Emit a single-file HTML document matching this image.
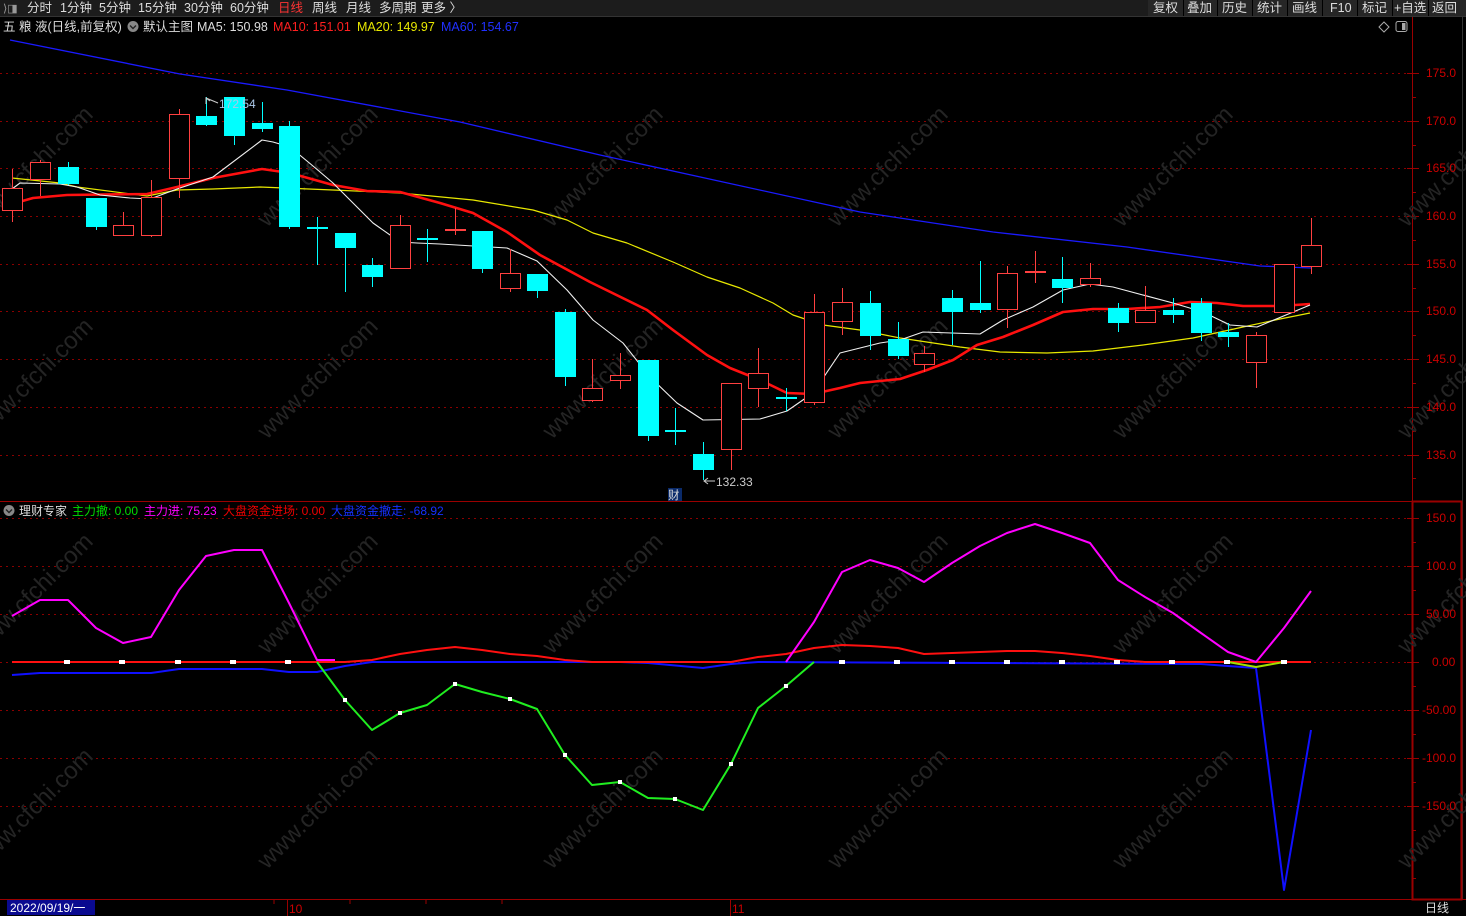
<!DOCTYPE html>
<html><head><meta charset="utf-8"><style>
html,body{margin:0;padding:0;background:#000;width:1466px;height:916px;overflow:hidden}
body{font-family:"Liberation Sans","Noto Sans CJK SC",sans-serif;}
svg{position:absolute;left:0;top:0}
text{font-family:"Liberation Sans","Noto Sans CJK SC",sans-serif}
</style></head><body>
<svg id="s" width="1466" height="916" viewBox="0 0 1466 916" xmlns="http://www.w3.org/2000/svg">
<rect x="0" y="0" width="1466" height="916" fill="#000"/>
<rect x="0" y="0" width="1466" height="16" fill="#1c1c1c"/>
<rect x="1148" y="0" width="318" height="16" fill="#262626"/>
<g stroke="#000" stroke-width="1">
<line x1="1183.5" y1="0" x2="1183.5" y2="16"/><line x1="1217.5" y1="0" x2="1217.5" y2="16"/><line x1="1252.5" y1="0" x2="1252.5" y2="16"/><line x1="1287.5" y1="0" x2="1287.5" y2="16"/><line x1="1322.5" y1="0" x2="1322.5" y2="16"/><line x1="1357.5" y1="0" x2="1357.5" y2="16"/><line x1="1392.5" y1="0" x2="1392.5" y2="16"/><line x1="1428.5" y1="0" x2="1428.5" y2="16"/>
</g>
<text x="3" y="12" font-size="11" fill="#999">⟩◨</text>
<g font-size="12.5" fill="#ddd">
<text x="27" y="12">分时</text><text x="60" y="12">1分钟</text><text x="99" y="12">5分钟</text><text x="138" y="12">15分钟</text><text x="184" y="12">30分钟</text><text x="230" y="12">60分钟</text>
<text x="278" y="12" fill="#ff3333">日线</text><text x="312" y="12">周线</text><text x="346" y="12">月线</text><text x="379" y="12">多周期</text><text x="421" y="12">更多 〉</text>
<text x="1153" y="12">复权</text><text x="1187" y="12">叠加</text><text x="1222" y="12">历史</text><text x="1257" y="12">统计</text><text x="1292" y="12">画线</text><text x="1330" y="12">F10</text><text x="1362" y="12">标记</text><text x="1394" y="12">+自选</text><text x="1432" y="12">返回</text>
</g>
<line x1="0" y1="16.5" x2="1466" y2="16.5" stroke="#333"/>
<g font-size="12.5">
<text x="3" y="31" fill="#ddd">五 粮 液(日线,前复权)</text>
<circle cx="133" cy="26.5" r="5.5" fill="#888"/><path d="M130 25.5l3 3 3-3" stroke="#222" stroke-width="1.4" fill="none"/>
<text x="143" y="31" fill="#ddd">默认主图</text>
<text x="197" y="31" fill="#ddd">MA5: 150.98</text>
<text x="273" y="31" fill="#ff2020">MA10: 151.01</text>
<text x="357" y="31" fill="#e8e800">MA20: 149.97</text>
<text x="441" y="31" fill="#2030ff">MA60: 154.67</text>
</g>
<path d="M1384 22l5 5-5 5-5-5z" stroke="#aaa" fill="none"/>
<rect x="1396" y="21.5" width="11" height="10" rx="2" stroke="#aaa" fill="none"/><rect x="1402" y="23" width="3.5" height="7" fill="#aaa"/>
<line x1="1412.5" y1="17" x2="1412.5" y2="900" stroke="#9a0000"/>
<line x1="1462.5" y1="17" x2="1462.5" y2="900" stroke="#333"/>
<line x1="0" y1="501.5" x2="1412" y2="501.5" stroke="#9a0000"/>
<line x1="0" y1="899.5" x2="1466" y2="899.5" stroke="#9a0000"/>
<rect x="1412.5" y="501.5" width="49" height="398" stroke="#9a0000" fill="none" stroke-width="2"/>
<g id="grid"></g>
<g id="wm" fill="#242424" font-size="24"></g>
<g id="chart"></g>
<g font-size="12" fill="#cc0000" text-anchor="start">
<text x="1426" y="77">175.0</text><text x="1426" y="125">170.0</text><text x="1426" y="172">165.0</text><text x="1426" y="220">160.0</text><text x="1426" y="268">155.0</text><text x="1426" y="315">150.0</text><text x="1426" y="363">145.0</text><text x="1426" y="411">140.0</text><text x="1426" y="459">135.0</text>
<text x="1426" y="522">150.0</text><text x="1426" y="570">100.0</text><text x="1426" y="618">50.00</text><text x="1432" y="666">0.00</text><text x="1422" y="714">-50.00</text><text x="1422" y="762">-100.0</text><text x="1422" y="810">-150.0</text>
</g>
<path d="M210 101l-4-3v6" stroke="#ccc" fill="none"/><line x1="206" y1="98" x2="218" y2="103" stroke="#ccc"/>
<text x="219" y="108" font-size="12" fill="#aac8e8">172.54</text>
<line x1="704" y1="481" x2="715" y2="481" stroke="#ccc"/><path d="M708 478l-4 3 4 3" stroke="#ccc" fill="none"/>
<text x="716" y="486" font-size="12" fill="#ccc">132.33</text>
<rect x="668" y="488" width="14" height="13" fill="#0a2a6a"/><text x="668" y="499" font-size="11.5" fill="#ddd">财</text>
<g font-size="12">
<circle cx="9" cy="510.5" r="5.5" fill="#888"/><path d="M6 509.5l3 3 3-3" stroke="#222" stroke-width="1.4" fill="none"/>
<text x="19" y="515" fill="#ddd">理财专家</text>
<text x="72" y="515" fill="#00dd00">主力撤: 0.00</text>
<text x="144" y="515" fill="#ff00ff">主力进: 75.23</text>
<text x="223" y="515" fill="#ee0000">大盘资金进场: 0.00</text>
<text x="331" y="515" fill="#1530ff">大盘资金撤走: -68.92</text>
</g>
<rect x="7" y="900" width="88" height="15" fill="#0a0a90"/>
<text x="10" y="912" font-size="12" fill="#fff">2022/09/19/一</text>
<line x1="287.5" y1="900" x2="287.5" y2="916" stroke="#9a0000"/><text x="289" y="913" font-size="12" fill="#cc0000">10</text>
<line x1="730.5" y1="900" x2="730.5" y2="916" stroke="#9a0000"/><text x="732" y="913" font-size="12" fill="#cc0000">11</text>
<g stroke="#9a0000"><line x1="274" y1="900" x2="274" y2="904"/><line x1="350" y1="900" x2="350" y2="904"/><line x1="426" y1="900" x2="426" y2="904"/><line x1="502" y1="900" x2="502" y2="904"/></g>
<text x="1425" y="912" font-size="12" fill="#ddd">日线</text>
</svg>
<script>
const NS="http://www.w3.org/2000/svg";
function el(p,t,a){const e=document.createElementNS(NS,t);for(const k in a)e.setAttribute(k,a[k]);p.appendChild(e);return e;}
const grid=document.getElementById('grid'),ch=document.getElementById('chart'),wm=document.getElementById('wm');
[73,121,168,216,264,311,359,407,455,518,566,614,662,710,758,806].forEach(y=>{
 el(grid,'line',{x1:0,y1:y+.5,x2:1406,y2:y+.5,stroke:'#8a0000','stroke-dasharray':'2 4'});
 el(grid,'line',{x1:1407,y1:y+.5,x2:1419,y2:y+.5,stroke:'#9a0000'});
});
[97,145,192,240,288,335,383,431,478,542,590,638,686,734,782,830,878].forEach(y=>el(grid,'line',{x1:1412,y1:y+.5,x2:1416,y2:y+.5,stroke:'#9a0000'}));
[228,440,655,870].forEach(y=>{[-18,267,552,837,1122,1407].forEach(x=>{
 const t=el(wm,'text',{x:x,y:y,transform:`rotate(-45 ${x} ${y})`});t.textContent='www.cfchi.com';
});});
function pl(pts,c,w){el(ch,'polyline',{points:pts.map(p=>p.join(',')).join(' '),fill:'none',stroke:c,'stroke-width':w,'stroke-linejoin':'round'});}
pl([[10,40],[180,74],[287,90],[460,122],[600,155],[860,212],[993,232],[1127,247],[1260,266],[1311,268]],'#1a1aff',1.3);
pl([[12,178],[60,183],[77,187],[147,196],[177,190],[213,189],[260,187],[333,190],[400,193],[473,200],[533,210],[567,220],[593,233],[627,243],[673,262],[707,277],[740,288],[773,303],[793,315],[823,325],[860,330],[900,338],[960,347],[1000,352],[1047,353],[1093,351],[1143,345],[1193,338],[1243,327],[1280,319],[1310,313]],'#e8e800',1.2);
pl([[12,204],[33,198],[67,195],[147,194],[177,187],[213,178],[262,169],[290,173],[333,185],[367,191],[400,192],[440,203],[473,213],[507,232],[540,255],[590,282],[647,310],[673,330],[707,355],[730,368],[760,380],[787,393],[813,394],[840,388],[860,383],[900,379],[927,370],[953,360],[977,345],[1003,337],[1033,325],[1063,312],[1093,309],[1127,309],[1160,307],[1190,302],[1217,303],[1243,306],[1280,306],[1310,304]],'#ff1010',2.6);
pl([[12,189],[20,183],[60,184],[77,187],[100,195],[130,198],[150,199],[177,189],[213,177],[262,140],[273,142],[290,147],[313,166],[333,183],[350,200],[373,223],[400,242],[417,243],[440,244],[507,248],[537,261],[567,290],[593,320],[623,343],[650,377],[677,403],[703,420],[760,419],[787,411],[813,393],[840,353],[860,348],[880,343],[900,340],[923,332],[980,334],[1003,320],[1033,307],[1063,290],[1090,284],[1113,287],[1173,303],[1203,312],[1230,325],[1257,327],[1310,305]],'#f0f0f0',1.1);
const C=[[12,188,211,169,222,'r'],[40,162,180,160,196,'r'],[68,167,184,162,185,'c'],[96,198,227,198,230,'c'],[123,225,236,212,236,'r'],[151,197,236,180,237,'r'],[179,114,179,109,198,'r'],[206,116,125,97,126,'c'],[234,97,136,97,145,'c'],[262,123,129,102,132,'c'],[289,126,227,121,229,'c'],[317,227,229,217,265,'c'],[345,233,248,233,292,'c'],[372,265,277,258,287,'c'],[400,225,269,215,269,'r'],[427,238,240,229,262,'c'],[455,229,231,208,235,'r'],[482,231,269,231,273,'c'],[510,273,289,249,292,'r'],[537,274,291,274,298,'c'],[565,312,377,309,386,'c'],[592,388,401,359,402,'r'],[620,375,381,353,389,'r'],[648,360,436,360,441,'c'],[675,430,432,408,445,'c'],[703,454,470,442,480,'c'],[731,383,450,383,470,'r'],[758,373,389,348,407,'r'],[786,397,399,388,411,'c'],[814,312,403,294,405,'r'],[842,302,322,288,335,'r'],[870,303,336,291,350,'c'],[898,339,356,322,359,'c'],[924,353,365,346,372,'r'],[952,298,312,290,345,'c'],[980,303,310,261,313,'c'],[1007,273,310,266,328,'r'],[1035,271,273,251,283,'r'],[1062,279,288,257,303,'c'],[1090,278,285,263,287,'r'],[1118,308,323,303,332,'c'],[1145,310,323,286,323,'r'],[1173,310,315,298,323,'c'],[1201,303,333,298,341,'c'],[1228,332,337,323,347,'c'],[1256,335,363,332,388,'r'],[1284,264,313,264,313,'r'],[1311,245,267,218,274,'r']];
C.forEach(([x,t,b,h,l,k])=>{
 const col=k=='r'?'#ff4040':'#00ffff';
 el(ch,'line',{x1:x+.5,y1:h,x2:x+.5,y2:l,stroke:col});
 if(b-t<=3){el(ch,'rect',{x:x-10,y:t,width:21,height:Math.max(2,b-t),fill:col});}
 else if(k=='r'){el(ch,'rect',{x:x-9.5,y:t+.5,width:20,height:b-t-1,fill:'#000',stroke:col});}
 else el(ch,'rect',{x:x-10,y:t,width:21,height:b-t,fill:col});
});
pl([[12,675],[40,673],[151,673],[179,669],[262,669],[289,672],[317,672],[345,666],[372,662],[620,662],[648,663],[703,668],[731,664],[758,662],[1201,664],[1228,666],[1256,668],[1284,890],[1311,730]],'#1010ff',2);
pl([[12,662],[289,662],[345,662],[372,660],[400,654],[427,650],[455,647],[482,650],[510,654],[537,656],[565,660],[592,662],[731,662],[758,657],[786,654],[814,648],[842,645],[870,646],[898,648],[924,654],[952,653],[980,652],[1007,651],[1035,651],[1062,653],[1090,656],[1118,660],[1145,662],[1311,662]],'#ff1010',2);
pl([[12,616],[40,600],[68,600],[96,628],[123,643],[151,637],[179,590],[206,556],[234,550],[262,550],[289,603],[317,660],[335,660]],'#ff00ff',2);
pl([[786,662],[814,622],[842,572],[870,560],[898,568],[924,582],[952,563],[980,546],[1007,533],[1035,524],[1062,533],[1090,543],[1118,580],[1145,597],[1173,613],[1201,633],[1228,652],[1256,662],[1284,628],[1311,591]],'#ff00ff',2);
pl([[317,662],[345,700],[372,730],[400,713],[427,705],[455,684],[482,692],[510,699],[537,709],[565,755],[592,785],[620,782],[648,798],[675,799],[703,810],[731,764],[758,708],[786,686],[814,662]],'#20ee20',2);
pl([[1228,662],[1256,667],[1284,662]],'#a0e000',2);
[67,122,178,233,288,842,897,952,1007,1062,1117,1172,1227,1284].forEach(x=>el(ch,'rect',{x:x-3,y:660,width:6,height:4,fill:'#fff'}));
[345,400,455,510,565,620,675,731,786].forEach((x,i)=>{const y=[700,713,684,699,755,782,799,764,686][i];el(ch,'rect',{x:x-2,y:y-2,width:4,height:4,fill:'#fff'});});
</script>
</body></html>
